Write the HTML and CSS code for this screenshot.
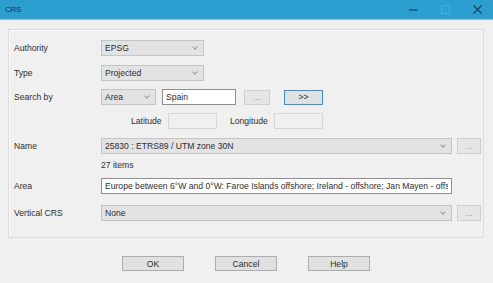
FILE: index.html
```html
<!DOCTYPE html>
<html lang="en">
<head>
    <meta charset="UTF-8">
    <title>CRS</title>
    <link rel="stylesheet" href="styles.css">
</head>
<body>
    <div class="titlebar">
        <span class="title">CRS</span>
        <div class="win-controls">
            <span class="win-btn">
                <svg width="9" height="9" viewBox="0 0 9 9"><path d="M0 5h9" stroke="#1e3f5a" stroke-width="1.2"/></svg>
            </span>
            <span class="win-btn">
                <svg width="9" height="9" viewBox="0 0 9 9"><rect x="0.5" y="0.5" width="8" height="8" fill="none" stroke="#4dafd9" stroke-width="1"/></svg>
            </span>
            <span class="win-btn">
                <svg width="9" height="9" viewBox="0 0 9 9"><path d="M0.5 0.5l8 8M8.5 0.5l-8 8" stroke="#1e3f5a" stroke-width="1.1"/></svg>
            </span>
        </div>
    </div>

    <div class="dialog">
        <div class="panel">
            <div class="row">
                <label class="label">Authority</label>
                <div class="combo w-short"><span>EPSG</span><i class="arrow"></i></div>
            </div>
            <div class="row r2">
                <label class="label">Type</label>
                <div class="combo w-short"><span>Projected</span><i class="arrow"></i></div>
            </div>
            <div class="row r3">
                <label class="label">Search by</label>
                <div class="combo w-area"><span>Area</span><i class="arrow"></i></div>
                <input class="text w-search" type="text" value="Spain">
                <button class="btn btn-dots disabled">...</button>
                <button class="btn btn-go">&gt;&gt;</button>
            </div>
            <div class="row r4">
                <span class="coord-label lat">Latitude</span>
                <input class="text disabled-input w-coord" type="text" disabled>
                <span class="coord-label lon">Longitude</span>
                <input class="text disabled-input w-coord" type="text" disabled>
            </div>
            <div class="row r5">
                <label class="label">Name</label>
                <div class="combo w-long"><span>25830 : ETRS89 / UTM zone 30N</span><i class="arrow"></i></div>
                <button class="btn btn-side disabled">...</button>
            </div>
            <div class="row items">
                <span class="count">27 items</span>
            </div>
            <div class="row r6">
                <label class="label">Area</label>
                <input class="text w-long" type="text" value="Europe between 6°W and 0°W: Faroe Islands offshore; Ireland - offshore; Jan Mayen - offshore; Norway including Svalbard - offshore; Spain - onshore and offshore.">
            </div>
            <div class="row r7">
                <label class="label">Vertical CRS</label>
                <div class="combo w-long"><span>None</span><i class="arrow"></i></div>
                <button class="btn btn-side disabled">...</button>
            </div>
        </div>

        <div class="actions">
            <button class="btn btn-action">OK</button>
            <button class="btn btn-action">Cancel</button>
            <button class="btn btn-action">Help</button>
        </div>
    </div>
</body>
</html>
```

FILE: styles.css
```css
body {
    margin: 0;
    width: 493px;
    height: 283px;
    background-color: #f0f0f0;
    font-family: "Liberation Sans", Arial, sans-serif;
    font-size: 8.6px;
    color: #2e2e2e;
    overflow: hidden;
}

.titlebar {
    height: 20px;
    background-color: #2b9fd0;
    display: flex;
    align-items: center;
    justify-content: space-between;
    border-bottom: 1px solid #7fc6e6;
    box-sizing: border-box;
}

.title {
    padding-left: 5px;
    font-size: 8px;
    letter-spacing: -0.3px;
    color: #173450;
}

.win-controls {
    display: flex;
}

.win-btn {
    width: 32px;
    height: 20px;
    display: flex;
    align-items: center;
    justify-content: center;
}

.dialog {
    padding: 9px 9px 0 8px;
}

.panel {
    border: 1px solid #dcdcdc;
    box-shadow: inset 1px 1px 0 #fafafa;
    padding: 10px 2px 16px 5px;
}

.row {
    display: flex;
    align-items: center;
    height: 16px;
}

.r2 { margin-top: 9px; }
.r3 { margin-top: 8px; }
.r4 { margin-top: 8px; }
.r5 { margin-top: 9px; }
.r6 { margin-top: 6px; }
.r7 { margin-top: 11px; }

.items {
    margin-top: 4px;
    height: 14px;
    padding-left: 87px;
}

.label {
    width: 87px;
    flex-shrink: 0;
}

.combo {
    height: 16px;
    box-sizing: border-box;
    background-color: #e3e3e3;
    border: 1px solid #c4c4c4;
    display: flex;
    align-items: center;
    justify-content: space-between;
    padding: 0 6px 0 3px;
}

.arrow {
    width: 3px;
    height: 3px;
    border-right: 1px solid #999;
    border-bottom: 1px solid #999;
    transform: rotate(45deg);
    margin-top: -3px;
}

.w-short { width: 103px; }
.w-area { width: 55px; }
.w-long { width: 351px; }

.text {
    height: 16px;
    box-sizing: border-box;
    border: 1px solid #8f8f8f;
    background-color: #fff;
    font-family: inherit;
    font-size: 8.6px;
    color: #2e2e2e;
    padding: 0 3px;
    margin: 0;
    outline: none;
}

.w-search {
    width: 74px;
    margin-left: 6px;
}

.disabled-input {
    background-color: #f0f0f0;
    border-color: #d7d7d7;
}

.w-coord { width: 49px; }

.coord-label.lat { margin-left: 117px; width: 37px; }
.coord-label.lon { margin-left: 13px; width: 44px; }

.btn {
    height: 16px;
    box-sizing: border-box;
    border: 1px solid #adadad;
    background-color: #e1e1e1;
    font-family: inherit;
    font-size: 8.6px;
    color: #2e2e2e;
    padding: 0;
    margin: 0;
}

.btn.disabled {
    border-color: #cfcfcf;
    background-color: #e6e6e6;
    color: #9a9a9a;
}

.btn-dots {
    width: 26px;
    margin-left: 8px;
    height: 15px;
}

.btn-go {
    width: 39px;
    margin-left: 14px;
    border: 1px solid #3c8ed2;
    box-shadow: inset 0 0 0 1px #cfe3f5;
    height: 15px;
}

.btn-side {
    width: 24px;
    margin-left: 5px;
}

.actions {
    display: flex;
    justify-content: center;
    gap: 31px;
    margin-top: 18px;
}

.btn-action {
    width: 62px;
    height: 15px;
}
```
